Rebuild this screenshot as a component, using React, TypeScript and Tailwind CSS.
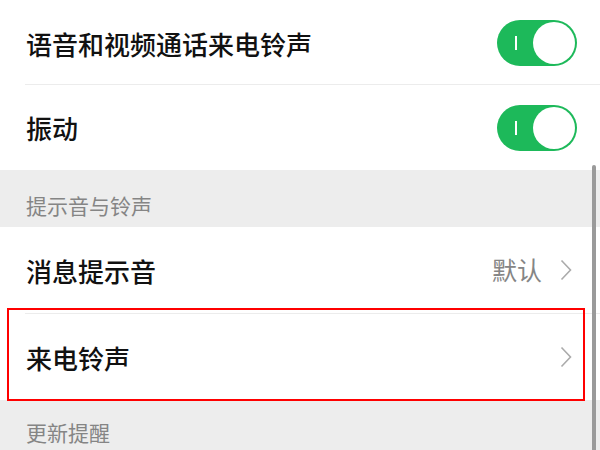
const font = { fontFamily: '"Noto Sans CJK SC", "Noto Sans", sans-serif' };

function Toggle() {
  return (
    <div className="relative flex h-[46px] w-[80px] items-center justify-end rounded-full bg-[#1db95a] p-[2px]">
      <span className="absolute left-[18px] top-[16px] h-[14px] w-[2px] bg-white" />
      <span className="h-[42px] w-[42px] rounded-full bg-white" />
    </div>
  );
}

function Chevron() {
  return (
    <svg width="12" height="22" viewBox="0 0 12 22" fill="none">
      <path d="M1.5 1.5 L10.5 11 L1.5 20.5" stroke="#ababab" strokeWidth="1.6" />
    </svg>
  );
}

export default function App() {
  return (
    <div className="relative h-[450px] w-[600px] overflow-hidden bg-[#ededed]" style={font}>
      {/* Switch group */}
      <div className="bg-white">
        <div className="flex h-[84px] items-center justify-between pl-[26px] pr-[23px] pt-[2px]">
          <span className="text-[26px] font-medium text-[#111111]">语音和视频通话来电铃声</span>
          <Toggle />
        </div>
        <div className="ml-[25px] h-px bg-[#ececec]" />
        <div className="flex h-[85px] items-center justify-between pl-[26px] pr-[23px]">
          <span className="text-[26px] font-medium text-[#111111]">振动</span>
          <Toggle />
        </div>
      </div>

      {/* Section header */}
      <div className="flex h-[57px] items-end pb-[6px] pl-[26px] text-[21px] text-[#858585]">
        提示音与铃声
      </div>

      {/* Sound group */}
      <div className="bg-white">
        <div className="flex h-[86px] items-center justify-between pl-[26px] pr-[28px]">
          <span className="text-[26px] font-medium text-[#111111]">消息提示音</span>
          <div className="flex items-center gap-[18px]">
            <span className="text-[25px] text-[#858585]">默认</span>
            <Chevron />
          </div>
        </div>
        <div className="ml-[25px] h-px bg-[#ececec]" />
        <div className="flex h-[86px] items-center justify-between pl-[26px] pr-[28px]">
          <span className="text-[26px] font-medium text-[#111111]">来电铃声</span>
          <Chevron />
        </div>
      </div>

      <div className="flex h-[50px] items-end pb-[2px] pl-[26px] text-[21px] text-[#858585]">
        更新提醒
      </div>

      {/* Highlight annotation */}
      <div className="absolute left-[7px] top-[308px] h-[93px] w-[578px] border-2 border-[#ff0000]" />

      {/* Scrollbar */}
      <div className="absolute left-[592px] top-[165px] h-[300px] w-[4px] rounded-full bg-[#9a9a9a]" />
    </div>
  );
}
